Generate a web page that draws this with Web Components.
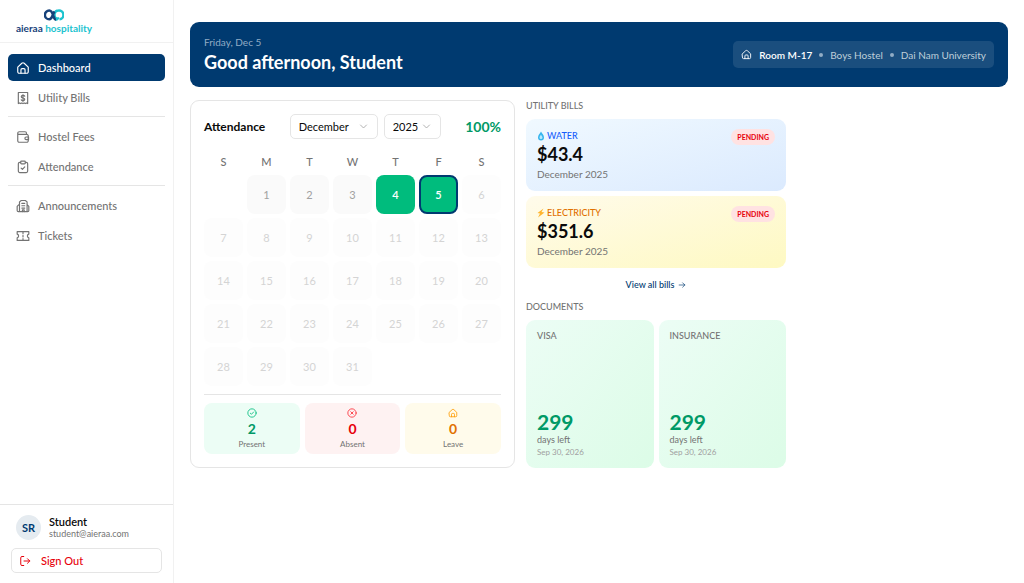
<!DOCTYPE html>
<html lang="en">
<head>
<meta charset="utf-8">
<meta name="viewport" content="width=device-width, initial-scale=1">
<title>aieraa hospitality</title>
<style>
  body { margin: 0; min-height: 100vh; background: #fff; color: #0a0a0a; font: 11px/16px Lato, "Open Sans", sans-serif; --navy: #003a70; --muted: #737373; --line: #e5e5e5; --green: #009966; }
</style>
</head>
<body>
<app-shell>
  <side-bar slot="side">
    <brand-logo slot="brand"></brand-logo>
    <nav-group>
      <nav-item icon="home" href="#dashboard" active>Dashboard</nav-item>
      <nav-item icon="bill" href="#bills">Utility Bills</nav-item>
    </nav-group>
    <nav-group>
      <nav-item icon="wallet" href="#fees">Hostel Fees</nav-item>
      <nav-item icon="clipboard" href="#attendance">Attendance</nav-item>
    </nav-group>
    <nav-group>
      <nav-item icon="news" href="#announcements">Announcements</nav-item>
      <nav-item icon="ticket" href="#tickets">Tickets</nav-item>
    </nav-group>
    <user-panel slot="foot" initials="SR" name="Student" email="student@aieraa.com"></user-panel>
  </side-bar>
  <welcome-banner date="Friday, Dec 5" room="Room M-17" hostel="Boys Hostel" school="Dai Nam University">Good afternoon, Student</welcome-banner>
  <dash-columns>
    <attendance-card></attendance-card>
    <side-stack>
      <section-block heading="Utility bills">
        <bill-card kind="water" amount="$43.4" month="December 2025">Water</bill-card>
        <bill-card kind="electricity" amount="$351.6" month="December 2025">Electricity</bill-card>
        <more-link href="#bills">View all bills</more-link>
      </section-block>
      <section-block heading="Documents" grow>
        <doc-row>
          <doc-card days="299" until="Sep 30, 2026">Visa</doc-card>
          <doc-card days="299" until="Sep 30, 2026">Insurance</doc-card>
        </doc-row>
      </section-block>
    </side-stack>
  </dash-columns>
</app-shell>
<script>
const ICONS = {
  home: '<path d="M3 10.500 10 3.900a3 3 0 0 1 4 0l7 6.600V18.500a2.500 2.500 0 0 1-2.500 2.500h-13A2.500 2.500 0 0 1 3 18.500z"/><path d="M8.500 21v-6a2 2 0 0 1 2-2h3a2 2 0 0 1 2 2v6"/>',
  bill: '<path d="M4 2.500h16v19l-2-1-2 1-2-1-2 1-2-1-2 1-2-1-2 1z"/><path d="M15 9c-.4-1-1.500-1.500-3-1.500-1.700 0-3 .8-3 2.200 0 3.100 6 1.500 6 4.600 0 1.400-1.300 2.200-3 2.200-1.500 0-2.600-.5-3-1.500M12 6v12"/>',
  wallet: '<path d="M18 7.500V5.500A2.500 2.500 0 0 0 15.500 3H5.500A2.500 2.500 0 0 0 3 5.500v13A2.500 2.500 0 0 0 5.500 21h13a2.500 2.500 0 0 0 2.500-2.500V10a2.500 2.500 0 0 0-2.500-2.500H4"/><path d="M21.500 12H17.500a2.200 2.200 0 0 0 0 4.500h4z"/>',
  clipboard: '<path d="M8 4H6.500A2.500 2.500 0 0 0 4 6.500v12.500A2.500 2.500 0 0 0 6.500 21.500h11a2.500 2.500 0 0 0 2.500-2.500V6.500A2.500 2.500 0 0 0 17.500 4H16"/><rect x="8" y="2" width="8" height="4.500" rx="1.500"/><path d="m8.800 14 2.200 2 4-4.300"/>',
  news: '<path d="M6 21.500V5l3-2.500h7L19 5v16.500zM6 10H4.500L2 12.500v7a2 2 0 0 0 2 2h16a2 2 0 0 0 2-2v-7L19.500 10"/><path d="M10 7.500h5M10 11.500h5M10 15.500h5M11 21.500V18.500h3v3"/>',
  ticket: '<path d="M2 4.500h20v4.300a3.300 3.300 0 0 0 0 6.400v4.300H2v-4.300a3.300 3.300 0 0 0 0-6.400z"/><path d="M12 5v3M12 11v2.500M12 16.500v3"/>',
  logout: '<path d="M9.500 3H6a2.500 2.500 0 0 0-2.500 2.500v13A2.500 2.500 0 0 0 6 21h3.500M10 12h11.500M17 7.500l4.500 4.500-4.500 4.500"/>',
  check: '<circle cx="12" cy="12" r="10"/><path d="m8 12.500 2.700 2.500L16 9.500"/>',
  cross: '<circle cx="12" cy="12" r="10"/><path d="m9 9 6 6M15 9l-6 6"/>',
  down: '<path d="m4 8 8 8 8-8"/>',
  right: '<path d="M3.500 12h17M14 5.500l6.500 6.500-6.500 6.500"/>'
};
const icon = (name, size, width = 2) => `<svg width="${size}" height="${size}" viewBox="0 0 24 24" fill="none" stroke="currentColor" stroke-width="${width}" stroke-linecap="round" stroke-linejoin="round" aria-hidden="true">${ICONS[name]}</svg>`;

function define(tag, css, html) {
  customElements.define(tag, class extends HTMLElement {
    connectedCallback() {
      if (this.shadowRoot) return;
      const root = this.attachShadow({ mode: 'open' });
      const t = document.createElement('template');
      t.innerHTML = `<style>*{box-sizing:border-box}svg{display:block;flex:none}${css}</style>` + (typeof html === 'function' ? html(n => this.getAttribute(n) ?? '') : html);
      root.append(t.content.cloneNode(true));
    }
  });
}

define('app-shell', `
  :host { display: flex; min-height: 100vh; }
  aside { flex: none; width: 174px; border-right: 1px solid #f1f1f1; display: flex; }
  main { flex: 1; min-width: 0; padding: 22px 16px; display: flex; flex-direction: column; gap: 13px; }
`, '<aside><slot name="side"></slot></aside><main><slot></slot></main>');

define('side-bar', `
  :host { flex: 1; display: flex; flex-direction: column; }
  header { padding: 9px 16px 7px; border-bottom: 1px solid #f1f1f1; }
  nav { flex: 1; padding: 11px 8px; }
  footer { border-top: 1px solid var(--line); padding: 10px 11px; }
`, '<header><slot name="brand"></slot></header><nav><slot></slot></nav><footer><slot name="foot"></slot></footer>');

define('brand-logo', `
  :host { display: flex; flex-direction: column; align-items: center; width: 76px; }
  p { margin: 0; font-weight: 700; font-size: 10px; line-height: 14px; color: #17427a; white-space: nowrap; }
  span { color: #1dc3cf; }
`, `<svg width="20" height="12" viewBox="0 0 40 24" fill="none" stroke-width="5"><path stroke="#1dc3cf" d="M24 19C19 14 20 3 29 3a8.500 8.500 0 0 1 2 17.500M23 20.500c3 1 5-1 5-4"/><path stroke="#17427a" d="M24 21C17 22 20 3 10.500 3a8.500 8.500 0 1 0 0 17.500C17 20.500 17 10 21 5"/></svg><p>aieraa <span>hospitality</span></p>`);

define('nav-group', `
  :host { display: flex; flex-direction: column; gap: 3px; }
  :host(:not(:first-of-type)) { margin-top: 5px; padding-top: 6px; border-top: 1px solid var(--line); }
`, '<slot></slot>');

define('nav-item', `
  :host { display: block; }
  a { display: flex; align-items: center; gap: 8px; height: 27px; padding: 0 8px; border-radius: 5px; color: var(--muted); text-decoration: none; font-weight: 500; }
  :host([active]) a { background: var(--navy); color: #fff; }
`, a => `<a href="${a('href')}">${icon(a('icon'), 14)}<slot></slot></a>`);

define('user-panel', `
  :host { display: block; }
  .who { display: flex; align-items: center; gap: 8px; padding-left: 5px; }
  .avatar { width: 25px; height: 25px; border-radius: 50%; background: #e5ebf0; color: var(--navy); font-weight: 700; display: grid; place-items: center; }
  b { display: block; font-weight: 600; line-height: 13px; }
  small { display: block; color: var(--muted); font-size: 9px; line-height: 12px; }
  button { margin-top: 8px; width: 100%; height: 25px; display: flex; align-items: center; gap: 10px; padding: 0 7px; background: #fff; border: 1px solid var(--line); border-radius: 5px; color: #e7000b; font: inherit; font-weight: 500; }
`, a => `<div class="who"><span class="avatar">${a('initials')}</span><div><b>${a('name')}</b><small>${a('email')}</small></div></div><button type="button">${icon('logout', 12)}Sign Out</button>`);

define('welcome-banner', `
  :host { display: flex; align-items: center; justify-content: space-between; padding: 12px 14px; border-radius: 9px; background: var(--navy); color: #fff; }
  p { margin: 0; font-size: 10px; color: #91acc5; }
  h1 { margin: 0; font-size: 18px; line-height: 25px; font-weight: 700; }
  .place { display: flex; align-items: center; gap: 7px; height: 27px; padding: 0 8px; border-radius: 5px; background: #1a4e7e; color: #bfced9; font-size: 10px; }
  svg, b { color: #fff; font-weight: 600; }
  i { width: 4px; height: 4px; border-radius: 50%; background: #91acc5; }
`, a => `<div><p>${a('date')}</p><h1><slot></slot></h1></div><div class="place">${icon('home', 11)}<b>${a('room')}</b><i></i><span>${a('hostel')}</span><i></i><span>${a('school')}</span></div>`);

define('dash-columns', `
  :host { display: grid; grid-template-columns: 5fr 4fr; gap: 11px; max-width: 596px; }
`, '<slot></slot>');

define('attendance-card', `
  :host { display: block; padding: 13px; border: 1px solid var(--line); border-radius: 9px; }
  header { display: flex; align-items: center; justify-content: space-between; }
  h2 { margin: 0; font-size: 12px; font-weight: 700; }
  strong { font-size: 14px; font-weight: 700; color: var(--green); }
  .picks { display: flex; gap: 6px; }
  label { display: grid; align-items: center; }
  label > * { grid-area: 1 / 1; }
  label svg { justify-self: end; margin-right: 10px; color: #999; pointer-events: none; }
  select { appearance: none; height: 25px; padding: 0 8px; border: 1px solid var(--line); border-radius: 5px; background: #fff; color: inherit; font: inherit; }
  .month { width: 88px; } .year { width: 57px; }
  table { width: calc(100% + 8px); margin: 10px -4px 0; table-layout: fixed; border-collapse: separate; border-spacing: 4px; }
  th { height: 18px; padding: 0; font-weight: 500; color: var(--muted); }
  td { padding: 0; }
  td div { aspect-ratio: 1; display: grid; place-items: center; border-radius: 8px; background: #fdfdfd; color: #d4d4d4; }
  td .past { background: #fafafa; color: #a1a1a1; }
  td .present { background: #00bc7d; color: #fff; font-weight: 600; }
  td .today { border: 2px solid var(--navy); }
  .totals { display: grid; grid-template-columns: repeat(3, 1fr); gap: 5px; margin-top: 4px; padding-top: 8px; border-top: 1px solid var(--line); }
`, () => {
  const cells = [''];
  for (let d = 1; d <= 31; d++) cells.push(d);
  while (cells.length < 35) cells.push('');
  const kind = d => d < 4 ? 'past' : d === 4 ? 'present' : d === 5 ? 'present today' : '';
  let rows = '';
  for (let w = 0; w < 5; w++) rows += '<tr>' + cells.slice(w * 7, w * 7 + 7).map(d => d ? `<td><div class="${kind(d)}">${d}</div></td>` : '<td></td>').join('') + '</tr>';
  return `<header><h2>Attendance</h2><div class="picks">
    <label><select class="month" aria-label="Month"><option>December</option></select>${icon('down', 9)}</label>
    <label><select class="year" aria-label="Year"><option>2025</option></select>${icon('down', 9)}</label></div><strong>100%</strong></header>
    <table><thead><tr>${[...'SMTWTFS'].map(d => `<th scope="col">${d}</th>`).join('')}</tr></thead><tbody>${rows}</tbody></table>
    <div class="totals"><total-tile tone="green" icon="check" count="2">Present</total-tile><total-tile tone="red" icon="cross" count="0">Absent</total-tile><total-tile tone="amber" icon="home" count="0">Leave</total-tile></div>`;
});

define('total-tile', `
  :host { display: flex; flex-direction: column; align-items: center; padding: 5px; border-radius: 8px; background: #ecfdf5; color: #009966; }
  :host([tone=red]) { background: #fef2f2; color: #e7000b; }
  :host([tone=amber]) { background: #fffbeb; color: #e17100; }
  svg { color: #00bc7d; } :host([tone=red]) svg { color: #fb2c36; } :host([tone=amber]) svg { color: #fe9a00; }
  b { font-size: 14px; line-height: 21px; font-weight: 700; }
  small { font-size: 8px; line-height: 10px; color: var(--muted); }
`, a => `${icon(a('icon'), 10)}<b>${a('count')}</b><small><slot></slot></small>`);

define('side-stack', ':host { display: flex; flex-direction: column; gap: 4px; }', '<slot></slot>');

define('section-block', `
  :host { display: flex; flex-direction: column; gap: 5px; }
  :host([grow]) { flex: 1; }
  h2 { margin: 0 0 2px; font-size: 9px; line-height: 12px; font-weight: 500; color: var(--muted); text-transform: uppercase; }
`, a => `<h2>${a('heading')}</h2><slot></slot>`);

define('bill-card', `
  :host { display: flex; justify-content: space-between; align-items: flex-start; padding: 10px 11px 9px; border-radius: 9px; background: linear-gradient(to bottom right, #f0f9ff, #dbeafe); color: #155dfc; }
  :host([kind=electricity]) { background: linear-gradient(to bottom right, #fffbeb, #fef9c2); color: #e17100; }
  .kind { display: flex; align-items: center; gap: 2px; font-size: 9px; line-height: 14px; font-weight: 500; text-transform: uppercase; }
  b { display: block; font-size: 18px; line-height: 23px; font-weight: 700; color: #0a0a0a; }
  .month { font-size: 10px; line-height: 16px; color: var(--muted); }
  mark { padding: 0 6px; border-radius: 8px; background: #ffe2e2; color: #e7000b; font-size: 7px; line-height: 16px; font-weight: 700; }
`, a => `<div><div class="kind">${a('kind') === 'water'
  ? '<svg width="8" height="10" viewBox="0 0 16 20"><path fill="#36b5ee" d="M8 1c2 4 6 7 6 12a6 6 0 0 1-12 0C2 8 6 5 8 1"/><path fill="#b9e9fc" d="M8 7c1 3 3 4 3 6a3 3 0 0 1-6 0c0-2 2-4 3-6"/></svg>'
  : '<svg width="8" height="10" viewBox="0 0 16 20"><path fill="#ffb52e" d="M13 1 1 10l5 1-4 8 13-10-6-1z"/></svg>'}<span><slot></slot></span></div><b>${a('amount')}</b><div class="month">${a('month')}</div></div><mark>PENDING</mark>`);

define('more-link', `
  :host { display: flex; justify-content: center; padding: 3px 0; }
  a { display: flex; align-items: center; gap: 4px; font-size: 9px; line-height: 18px; font-weight: 500; color: var(--navy); text-decoration: none; }
`, a => `<a href="${a('href')}"><slot></slot>${icon('right', 8)}</a>`);

define('doc-row', ':host { flex: 1; display: grid; grid-template-columns: 1fr 1fr; gap: 5px; }', '<slot></slot>');

define('doc-card', `
  :host { display: flex; flex-direction: column; padding: 10px 11px; border-radius: 9px; background: linear-gradient(to bottom right, #ecfdf5, #dcfce7); color: var(--muted); }
  h3 { margin: 0 0 auto; font-size: 9px; line-height: 12px; font-weight: 500; text-transform: uppercase; }
  b { font-size: 21px; line-height: 25px; font-weight: 700; color: var(--green); }
  span { font-size: 9px; line-height: 12px; }
  small { font-size: 8px; line-height: 12px; color: #a1a1a1; }
`, a => `<h3><slot></slot></h3><b>${a('days')}</b><span>days left</span><small>${a('until')}</small>`);
</script>
</body>
</html>
